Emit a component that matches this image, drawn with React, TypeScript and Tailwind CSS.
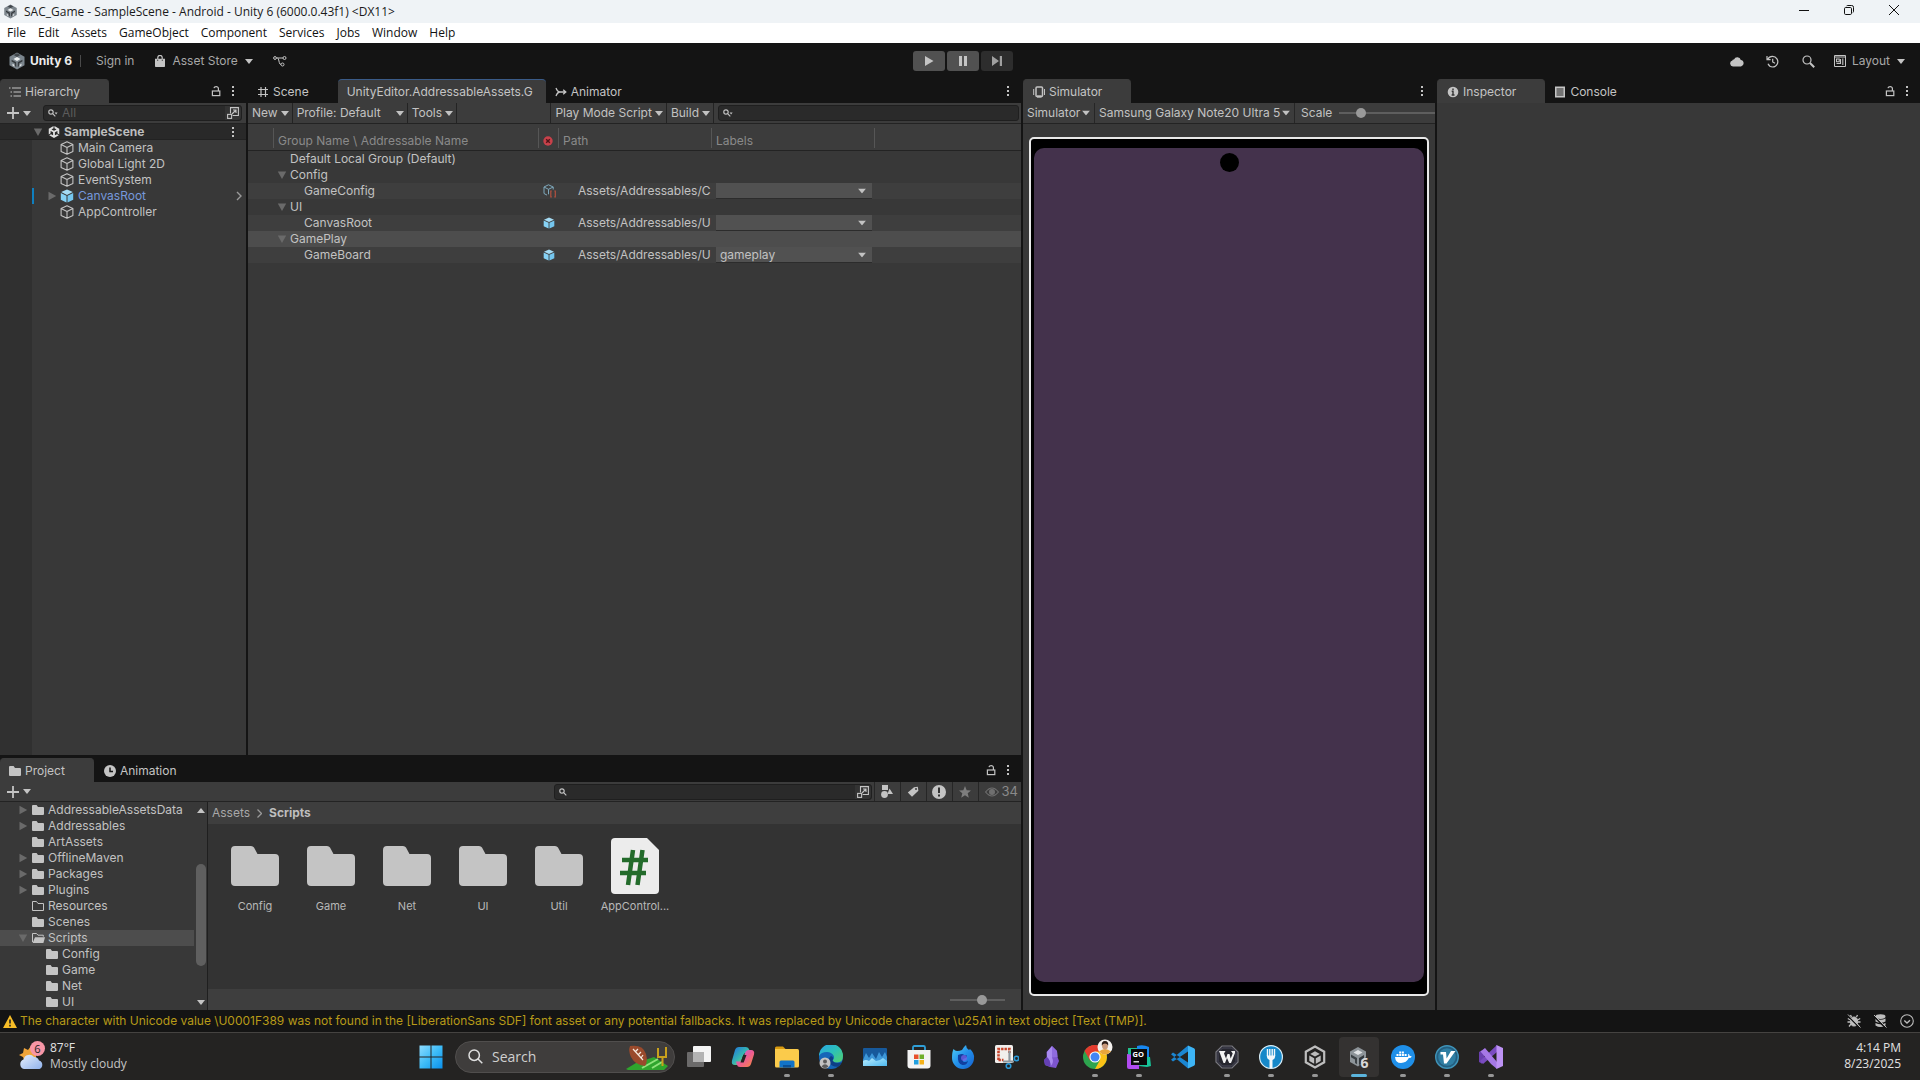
import { useId } from "react";
import type { ReactNode } from "react";
import { FaUnity } from "react-icons/fa6";

/* ---------- small glyphs ---------- */

function Caret({ className = "" }: { className?: string }) {
  return (
    <svg viewBox="0 0 8 5" className={`h-[5px] w-2 shrink-0 ${className}`} fill="currentColor" aria-hidden="true">
      <path d="M0 0h8L4 5z" />
    </svg>
  );
}

function Foldout({ open }: { open: boolean }) {
  return (
    <svg viewBox="0 0 10 10" className="size-2.5 shrink-0 text-[#6a6a6a]" fill="currentColor" aria-hidden="true">
      {open ? <path d="M0.8 1.5h8.4L5 9z" /> : <path d="M1.5 0.8v8.4L9.2 5z" />}
    </svg>
  );
}

function Dots() {
  return (
    <svg viewBox="0 0 4 12" className="h-3 w-1" fill="currentColor" aria-hidden="true">
      <rect x="1" y="1" width="2" height="2" />
      <rect x="1" y="5" width="2" height="2" />
      <rect x="1" y="9" width="2" height="2" />
    </svg>
  );
}

function Lock() {
  return (
    <svg viewBox="0 0 10 12" className="h-3 w-2.5" fill="none" stroke="currentColor" strokeWidth="1.2" aria-hidden="true">
      <rect x="1.4" y="6" width="7.4" height="4.6" />
      <path d="M7.4 6V3.6C7.4 2.3 6.4 1.7 5.2 1.7S3.2 2.2 2.9 3.1" />
    </svg>
  );
}

function Plus() {
  return (
    <svg viewBox="0 0 12 12" className="size-3" fill="none" stroke="currentColor" strokeWidth="1.8" aria-hidden="true">
      <path d="M6 0v12M0 6h12" />
    </svg>
  );
}

function Lens({ menu = false }: { menu?: boolean }) {
  return (
    <svg viewBox="0 0 10 8" className="h-2 w-2.5 shrink-0" fill="none" stroke="currentColor" strokeWidth="1.2" aria-hidden="true">
      <circle cx="3" cy="3" r="2.2" />
      <path d="M4.7 4.7L7.3 7.3" />
      {menu && <path d="M6.6 3.6h3L8.1 5.4z" fill="currentColor" stroke="none" />}
    </svg>
  );
}

function PopOut() {
  return (
    <svg viewBox="0 0 12 12" className="size-3" fill="none" stroke="currentColor" strokeWidth="1.1" aria-hidden="true">
      <path d="M3.5 6.6V.6h7.9v7.9H5.6" />
      <rect x=".6" y="7.4" width="4" height="4" />
      <path d="M5 7l4-4M6 3h3v3" />
    </svg>
  );
}

function UnityCube({ className = "size-4", tone = "#8d959b" }: { className?: string; tone?: string }) {
  return (
    <svg viewBox="0 0 24 24" className={className} aria-hidden="true">
      <path d="M12 .6l10 5.700v11.400l-10 5.700-10-5.700V6.300z" fill={tone} />
      <path d="M12 1.500l4.500 2.600-4.500 2.600-4.500-2.600z" fill="#42484d" />
      <path d="M12 6.800l4.600 2.600L12 12 7.400 9.400z" fill="#eef1f2" />
      <path d="M4.800 10.200l6.200 3.600v6.200l-2-1.200v-3.700l-4.200-2.400z" fill="#353a3e" />
      <path d="M19.200 10.200L13 13.800V20l2-1.200v-3.700l4.200-2.400z" fill="#353a3e" />
      <path d="M6 15.500l2.500 1.500v2.500L6 18z" fill="#dfe3e5" />
      <path d="M18 15.500l-2.500 1.500v2.500L18 18z" fill="#dfe3e5" />
    </svg>
  );
}

function CubeOutline() {
  return (
    <svg viewBox="0 0 14 14" className="size-3.5 shrink-0" fill="none" stroke="#c4c4c4" strokeWidth="1.100" strokeLinejoin="round" aria-hidden="true">
      <path d="M7 .7l5.900 2.800v7L7 13.300 1.100 10.500v-7zM1.100 3.500L7 6.500l5.900-3M7 6.500v6.800" />
    </svg>
  );
}

function PrefabCube({ className = "size-3.5" }: { className?: string }) {
  return (
    <svg viewBox="0 0 14 14" className={`${className} shrink-0`} aria-hidden="true">
      <path d="M7 .5l5.800 2.600L7 5.900 1.200 3.100z" fill="#a5dcf5" />
      <path d="M.8 4l5.700 2.800v6.700L.8 10.700z" fill="#86d2f5" />
      <path d="M13.200 4L7.500 6.800v6.700l5.700-2.800z" fill="#74c6ee" />
    </svg>
  );
}

function DataCube() {
  return (
    <svg viewBox="0 0 14 14" className="size-3.5 shrink-0" fill="none" aria-hidden="true">
      <path d="M5.500 .8l4.700 2.200v2.500M5.500 .8L1 3v6.500l3 1.600M1 3l4.500 2.300L10.200 3M5.500 5.300v5" stroke="#7fa9bd" />
      <path d="M8.800 7h-1v5.800h1M11.300 7h1v5.800h-1" stroke="#b2503f" strokeWidth="1.200" />
    </svg>
  );
}

function Folder({ kind = "solid" }: { kind?: "solid" | "empty" | "open" }) {
  if (kind === "empty")
    return (
      <svg viewBox="0 0 12 10" className="h-2.5 w-3 shrink-0" fill="none" stroke="#c4c4c4" aria-hidden="true">
        <path d="M.5 9.500V.5h4l1.500 2h5.500v7z" />
      </svg>
    );
  if (kind === "open")
    return (
      <svg viewBox="0 0 13 10" className="h-2.5 w-[13px] shrink-0" aria-hidden="true">
        <path d="M.5 9V.5h4l1.500 1.700h5.300v1.500" fill="none" stroke="#c4c4c4" />
        <path d="M3 4.200h10L11.400 10H.6z" fill="#c4c4c4" />
      </svg>
    );
  return (
    <svg viewBox="0 0 12 10" className="h-2.5 w-3 shrink-0" fill="#c4c4c4" aria-hidden="true">
      <path d="M0 1q0-1 1-1h3.600l1.400 2H11q1 0 1 1v6q0 1-1 1H1q-1 0-1-1z" />
    </svg>
  );
}

/* ---------- shared building blocks ---------- */

function Tab({ icon, label, active, focused, tight }: { icon?: ReactNode; label: string; active?: boolean; focused?: boolean; tight?: boolean }) {
  return (
    <button
      role="tab"
      aria-selected={!!active}
      className={`flex items-center gap-1 border-t pl-[9px] whitespace-nowrap ${tight ? "pr-[13px]" : "pr-[29px]"} ${
        active ? "rounded-t-sm bg-[#3c3c3c]" : ""
      } ${focused ? "border-[#3a5b88]" : active ? "border-[#3c3c3c]" : "border-transparent"}`}
    >
      {icon}
      <span>{label}</span>
    </button>
  );
}

function TabBar({ children, lock }: { children: ReactNode; lock?: boolean }) {
  return (
    <div className="flex h-6 shrink-0 bg-[#141414] text-[#c4c4c4]">
      <div role="tablist" className="flex min-w-0 flex-1 overflow-hidden">
        {children}
      </div>
      <div className="flex items-center gap-2.5 pr-[11px]">
        {lock && (
          <button aria-label="Lock panel">
            <Lock />
          </button>
        )}
        <button aria-label="Panel options">
          <Dots />
        </button>
      </div>
    </div>
  );
}

function MenuButton({ label, className = "" }: { label: string; className?: string }) {
  return (
    <button className={`flex h-full items-center gap-[3px] border-r border-[#232323] pl-1 pr-[3px] whitespace-nowrap ${className}`}>
      <span>{label}</span>
      <Caret />
    </button>
  );
}

function SelectBox({ label, options, className, caret }: { label: string; options: string[]; className: string; caret: string }) {
  return (
    <label className={`relative block ${className}`}>
      <span className="sr-only">{label}</span>
      <select className="h-full w-full appearance-none bg-transparent pl-1 leading-4 outline-none">
        {options.map((o) => (
          <option key={o}>{o}</option>
        ))}
      </select>
      <Caret className={`pointer-events-none absolute top-1/2 -translate-y-1/2 ${caret}`} />
    </label>
  );
}

const RANGE =
  "h-3 appearance-none bg-transparent [&::-webkit-slider-runnable-track]:h-0.5 [&::-webkit-slider-runnable-track]:bg-[#5e5e5e] [&::-webkit-slider-thumb]:-mt-1 [&::-webkit-slider-thumb]:size-2.5 [&::-webkit-slider-thumb]:appearance-none [&::-webkit-slider-thumb]:rounded-full [&::-webkit-slider-thumb]:bg-[#999]";

/* ---------- window chrome ---------- */

function TitleBar() {
  return (
    <header className="flex h-[23px] shrink-0 items-center bg-[#eff3f6] pl-[3px] font-['Open_Sans',sans-serif] text-xs text-[#1a1a1a]">
      <UnityCube className="size-[15px]" tone="#7d868d" />
      <h1 className="ml-1.5 flex-1">SAC_Game - SampleScene - Android - Unity 6 (6000.0.43f1) &lt;DX11&gt;</h1>
      <div className="flex pb-1 pr-1">
        <button aria-label="Minimize" className="flex w-[45px] justify-center">
          <svg viewBox="0 0 10 10" className="size-2.5" stroke="#111" strokeWidth="1"><path d="M0 5.500h10" /></svg>
        </button>
        <button aria-label="Restore" className="flex w-[45px] justify-center">
          <svg viewBox="0 0 10 10" className="size-2.5" stroke="#111" fill="none"><rect x=".5" y="2.500" width="7" height="7" rx="1.200" /><path d="M2.500 1.200Q2.800.5 3.500.5h4.200q1.800 0 1.800 1.800v4.200q0 .8-.8 1.100" /></svg>
        </button>
        <button aria-label="Close" className="flex w-[45px] justify-center">
          <svg viewBox="0 0 10 10" className="size-2.5" stroke="#111"><path d="M0 0l10 10M10 0L0 10" /></svg>
        </button>
      </div>
    </header>
  );
}

function MenuBar() {
  const items = ["File", "Edit", "Assets", "GameObject", "Component", "Services", "Jobs", "Window", "Help"];
  return (
    <nav className="flex h-5 shrink-0 items-center gap-3 bg-white pl-[7px] font-['Open_Sans',sans-serif] text-xs text-[#111]">
      {items.map((m) => (
        <button key={m}>{m}</button>
      ))}
    </nav>
  );
}

function EditorToolbar() {
  return (
    <div className="grid h-9 shrink-0 grid-cols-[1fr_auto_1fr] items-center bg-[#141414] text-[#a8a8a8]">
      <div className="flex items-center">
        <UnityCube className="ml-2 size-[18px]" tone="#7b858d" />
        <span className="ml-1 font-bold text-[#ececec]">Unity 6</span>
        <span className="ml-2 h-3 w-px bg-[#4a4a4a]" />
        <button className="ml-[15px]">Sign in</button>
        <button className="ml-[21px] flex items-center">
          <svg viewBox="0 0 10 12" className="h-3 w-2.5" aria-hidden="true">
            <path d="M2.800 4V2.600a2.200 2.200 0 014.400 0V4" fill="none" stroke="#c4c4c4" strokeWidth="1.200" />
            <path d="M0 3.800h10v7.400q0 .8-.8.8H.8q-.8 0-.8-.8z" fill="#c4c4c4" />
            <path d="M2.200 5.200h1M6.800 5.200h1" stroke="#141414" />
          </svg>
          <span className="mx-[7px]">Asset Store</span>
          <Caret className="text-[#c4c4c4]" />
        </button>
        <button className="ml-5" aria-label="Version control">
          <svg viewBox="0 0 14 12" className="h-3 w-3.5" fill="none" stroke="#c4c4c4" aria-hidden="true">
            <circle cx="2" cy="3" r="1.400" />
            <circle cx="11.500" cy="3" r="1.500" />
            <circle cx="9.500" cy="9.500" r="1.500" />
            <path d="M3.400 3H10M4.500 3q.8 0 1.200 2l.6 2.500q.4 2 1.700 2" />
          </svg>
        </button>
      </div>
      <div className="flex gap-0.5 pl-1.5 text-[#c4c4c4]">
        <button aria-label="Play" className="flex h-5 w-8 items-center justify-center rounded-[3px] bg-[#515151]">
          <svg viewBox="0 0 10 10" className="size-2.5" fill="currentColor"><path d="M1 0l8.500 5L1 10z" /></svg>
        </button>
        <button aria-label="Pause" className="flex h-5 w-8 items-center justify-center rounded-[3px] bg-[#515151]">
          <svg viewBox="0 0 10 10" className="size-2.5" fill="currentColor"><path d="M1 0h3v10H1zM6 0h3v10H6z" /></svg>
        </button>
        <button aria-label="Step" className="flex h-5 w-8 items-center justify-center rounded-[3px] bg-[#2d2d2d] text-[#a0a0a0]">
          <svg viewBox="0 0 10 10" className="size-2.5" fill="currentColor"><path d="M0 0l7 5-7 5zM7.800 0H10v10H7.800z" /></svg>
        </button>
      </div>
      <div className="flex items-center justify-end pr-[15px] text-[#c4c4c4]">
        <button aria-label="Cloud">
          <svg viewBox="0 0 14 11" className="h-[11px] w-3.5" fill="currentColor"><path d="M3 10.500a3 3 0 01-.6-5.900Q2.500 3.300 4 3.500A3.600 3.600 0 0110.800 4 3.300 3.300 0 0111 10.500z" /></svg>
        </button>
        <button aria-label="Undo history" className="ml-[22px]">
          <svg viewBox="0 0 13 13" className="size-[13px]" fill="none" stroke="currentColor" strokeWidth="1.200"><path d="M1.800 4.200A5.300 5.300 0 116.700 12 5.200 5.200 0 012 8.800M1 1v3.600h3.600M6.700 3.800V7l2.300 1.200" /></svg>
        </button>
        <button aria-label="Search" className="ml-[23px]">
          <svg viewBox="0 0 13 13" className="size-[13px]" fill="none" stroke="currentColor"><circle cx="5" cy="5" r="4" strokeWidth="1.200" /><path d="M8 8l4.200 4.200" strokeWidth="2" /></svg>
        </button>
        <button className="ml-[19px] flex items-center text-[#a8a8a8]">
          <svg viewBox="0 0 12 12" className="size-3 text-[#c4c4c4]" fill="none" stroke="currentColor"><path d="M.5.5h11v11H.5zM.5 2h11" /><path d="M2.500 4h2.700v2.700H2.500zM2.500 8.500h4M6.500 4v5M8.800 3.500V10" strokeWidth="1.100" /></svg>
          <span className="ml-1.5 mr-[7px]">Layout</span>
          <Caret className="text-[#c4c4c4]" />
        </button>
      </div>
    </div>
  );
}

/* ---------- hierarchy ---------- */

const OBJECTS = ["Main Camera", "Global Light 2D", "EventSystem", "CanvasRoot", "AppController"];

function Hierarchy() {
  return (
    <section className="flex min-h-0 min-w-0 flex-col bg-[#383838]">
      <TabBar lock>
        <Tab
          active
          label="Hierarchy"
          icon={
            <svg viewBox="0 0 12 10" className="h-2.5 w-3" fill="none" stroke="currentColor" strokeWidth="1.200">
              <path d="M3 1h9M4.500 5H12M4.500 9H12M0 1h1.500M1.500 5H3M1.500 9H3" />
            </svg>
          }
        />
      </TabBar>
      <div className="flex h-[21px] shrink-0 items-center border-b border-[#232323] bg-[#3c3c3c] pl-[7px] pr-1 text-[#c4c4c4]">
        <button aria-label="Create object" className="flex items-center gap-1">
          <Plus />
          <Caret />
        </button>
        <div className="ml-3 flex h-4 flex-1 items-center rounded-[3px] border border-[#1f1f1f] bg-[#2a2a2a] pl-1">
          <Lens menu />
          <input aria-label="Search hierarchy" placeholder="All" className="ml-1 w-full min-w-0 bg-transparent outline-none placeholder:text-[#5c5c5c]" />
          <button aria-label="Open in search window" className="flex h-3.5 items-center rounded-r-sm bg-[#333] px-0.5">
            <PopOut />
          </button>
        </div>
      </div>
      <div className="flex h-4 shrink-0 items-center border-b border-[#222] bg-[#292929] pl-[33px] pr-[11px]">
        <Foldout open />
        <FaUnity className="ml-[5px] size-3 text-[#e0e0e0]" />
        <span className="ml-1 flex-1 font-bold text-[#bdbdbd]">SampleScene</span>
        <button aria-label="Scene options" className="text-[#c4c4c4]">
          <Dots />
        </button>
      </div>
      <div className="flex min-h-0 flex-1">
        <div className="w-8 bg-[#303030]" />
        <ul className="flex-1">
          {OBJECTS.map((name) => {
            const prefab = name === "CanvasRoot";
            return (
              <li key={name} className={`flex h-4 items-center border-l-2 ${prefab ? "border-[#0f7fbf]" : "border-transparent"}`}>
                <span className="ml-[13px] mr-[3px] flex w-2.5">{prefab && <Foldout open={false} />}</span>
                {prefab ? <PrefabCube /> : <CubeOutline />}
                <span className={`ml-1 flex-1 ${prefab ? "text-[#7699dc]" : ""}`}>{name}</span>
                {prefab && (
                  <svg viewBox="0 0 6 10" className="mr-1 h-2.5 w-1.5" fill="none" stroke="#9a9a9a" strokeWidth="1.400">
                    <path d="M1 1l4 4-4 4" />
                  </svg>
                )}
              </li>
            );
          })}
        </ul>
      </div>
    </section>
  );
}

/* ---------- addressables ---------- */

type Row = { name: string; group?: boolean; leaf?: boolean; icon?: "data" | "prefab"; path?: string; label?: string; selected?: boolean };

const ROWS: Row[] = [
  { name: "Default Local Group (Default)", group: true, leaf: true },
  { name: "Config", group: true },
  { name: "GameConfig", icon: "data", path: "Assets/Addressables/C", label: "" },
  { name: "UI", group: true },
  { name: "CanvasRoot", icon: "prefab", path: "Assets/Addressables/U", label: "" },
  { name: "GamePlay", group: true, selected: true },
  { name: "GameBoard", icon: "prefab", path: "Assets/Addressables/U", label: "gameplay" },
];

function HeadCell({ children }: { children?: ReactNode }) {
  return (
    <th className="p-0 text-left align-bottom font-normal">
      <div className="mb-0.5 flex h-5 items-center border-l border-[#565656] pl-1 pt-[5px] leading-4">{children}</div>
    </th>
  );
}

function Addressables() {
  return (
    <section className="flex min-h-0 min-w-0 flex-col bg-[#383838]">
      <TabBar>
        <Tab
          label="Scene"
          icon={
            <svg viewBox="0 0 12 12" className="size-3" fill="none" stroke="currentColor" strokeWidth="1.200">
              <path d="M4 1v10M8.500 1v10M1 3.500h10M1 8.500h10" />
            </svg>
          }
        />
        <Tab active focused tight label="UnityEditor.AddressableAssets.G" />
        <Tab
          label="Animator"
          icon={
            <svg viewBox="0 0 12 10" className="h-2.5 w-3" fill="none" stroke="currentColor" strokeWidth="1.300">
              <path d="M1 1q1.500 4 4 4M1 9q1.500-4 4-4h5.500M8.200 2.800L10.800 5 8.200 7.200" />
            </svg>
          }
        />
      </TabBar>
      <div className="flex h-[21px] shrink-0 items-center border-b border-[#232323] bg-[#3c3c3c]">
        <MenuButton label="New" />
        <MenuButton label="Profile: Default" className="w-[115px] justify-between" />
        <MenuButton label="Tools" />
        <div className="ml-auto flex h-full border-l border-[#232323]">
          <MenuButton label="Play Mode Script" />
          <MenuButton label="Build" />
        </div>
        <div className="ml-1 mr-0.5 flex h-4 w-[301px] min-w-0 items-center rounded-[3px] border border-[#1f1f1f] bg-[#2a2a2a] pl-1">
          <Lens menu />
          <input aria-label="Search groups" className="w-full min-w-0 bg-transparent outline-none" />
        </div>
      </div>
      <table className="w-full table-fixed border-separate border-spacing-0">
        <colgroup>
          <col className="w-[25px]" />
          <col className="w-[265px]" />
          <col className="w-5" />
          <col className="w-[153px]" />
          <col className="w-[163px]" />
          <col />
        </colgroup>
        <thead>
          <tr className="h-[27px] bg-[#3c3c3c] text-[#8a8a8a] [&>*]:border-b [&>*]:border-[#232323]">
            <td />
            <HeadCell>Group Name \ Addressable Name</HeadCell>
            <HeadCell>
              <svg viewBox="0 0 10 10" className="size-2.5" role="img" aria-label="Asset type">
                <circle cx="5" cy="5" r="4.700" fill="#c8414a" />
                <path d="M3.200 3.200l3.600 3.600M6.800 3.200L3.200 6.800" stroke="#4e1418" strokeWidth="1.400" />
              </svg>
            </HeadCell>
            <HeadCell>Path</HeadCell>
            <HeadCell>Labels</HeadCell>
            <HeadCell />
          </tr>
        </thead>
        <tbody>
          {ROWS.map((r) => (
            <tr key={r.name} className={`h-4 ${r.selected ? "bg-[#4d4d4d]" : r.group ? "bg-[#383838]" : "bg-[#3e3e3e]"}`}>
              <td className="p-0" />
              <td className="p-0">
                <div className={`flex h-4 items-center ${r.group ? "pl-1" : "pl-[31px]"}`}>
                  {r.group && <span className="mr-[3px] flex w-2.5">{!r.leaf && <Foldout open />}</span>}
                  {r.name}
                </div>
              </td>
              <td className="p-0">
                <div className="flex h-4 items-center pl-[5px]">{r.icon === "data" ? <DataCube /> : r.icon ? <PrefabCube className="size-3" /> : null}</div>
              </td>
              <td className="p-0">
                <div className="pl-5 leading-4 whitespace-nowrap">{r.path}</div>
              </td>
              <td className="p-0">
                {r.label !== undefined && (
                  <SelectBox
                    label={`Labels for ${r.name}`}
                    options={[r.label]}
                    className="ml-[5px] mr-0.5 h-4 border-b border-[#2c2c2c] bg-[#515151]"
                    caret="right-1.5"
                  />
                )}
              </td>
              <td />
            </tr>
          ))}
        </tbody>
      </table>
    </section>
  );
}

/* ---------- project ---------- */

type TreeRow = { name: string; fold?: "open" | "closed"; kind?: "solid" | "empty" | "open"; child?: boolean; selected?: boolean };

const TREE: TreeRow[] = [
  { name: "AddressableAssetsData", fold: "closed" },
  { name: "Addressables", fold: "closed" },
  { name: "ArtAssets" },
  { name: "OfflineMaven", fold: "closed" },
  { name: "Packages", fold: "closed" },
  { name: "Plugins", fold: "closed" },
  { name: "Resources", kind: "empty" },
  { name: "Scenes" },
  { name: "Scripts", fold: "open", kind: "open", selected: true },
  { name: "Config", child: true },
  { name: "Game", child: true },
  { name: "Net", child: true },
  { name: "UI", child: true },
];

function FilterButton({ label, children }: { label: string; children: ReactNode }) {
  return (
    <button aria-label={label} className="flex h-full w-[26px] items-center justify-center border-l border-[#262626]">
      {children}
    </button>
  );
}

function Project() {
  return (
    <section className="flex min-h-0 min-w-0 flex-col bg-[#383838]">
      <TabBar lock>
        <Tab active label="Project" icon={<Folder />} />
        <Tab
          label="Animation"
          icon={
            <svg viewBox="0 0 12 12" className="ml-px size-3" aria-hidden="true">
              <circle cx="6" cy="6" r="6" fill="#c4c4c4" />
              <path d="M6 2.500V6.500h3" fill="none" stroke="#141414" strokeWidth="1.500" />
            </svg>
          }
        />
      </TabBar>
      <div className="flex h-5 shrink-0 items-center justify-between border-b border-[#232323] bg-[#3c3c3c] pl-[7px] text-[#c4c4c4]">
        <button aria-label="Create asset" className="flex items-center gap-1">
          <Plus />
          <Caret />
        </button>
        <div className="flex h-full min-w-0 items-center">
          <div className="mr-0.5 flex h-4 w-[318px] min-w-0 items-center rounded-[3px] border border-[#1f1f1f] bg-[#2a2a2a] pl-1">
            <Lens />
            <input aria-label="Search project" className="w-full min-w-0 bg-transparent outline-none" />
            <button aria-label="Open in search window" className="flex h-3.5 items-center rounded-r-sm bg-[#333] px-0.5">
              <PopOut />
            </button>
          </div>
          <FilterButton label="Search by type">
            <svg viewBox="0 0 12 13" className="h-[13px] w-3" fill="currentColor"><path d="M1 0h6v5H1zM8.500 3.500L12 9H6.500z" /><circle cx="3.500" cy="9.500" r="3.400" /></svg>
          </FilterButton>
          <FilterButton label="Search by label">
            <svg viewBox="0 0 12 12" className="size-3" fill="currentColor"><path d="M7 1.200L10.800.8l.6 3.900L5 10.800.8 6.600z" /><circle cx="9" cy="3" r="1" fill="#3c3c3c" /></svg>
          </FilterButton>
          <FilterButton label="Search by import log">
            <svg viewBox="0 0 14 14" className="size-3.5"><circle cx="7" cy="7" r="7" fill="#c4c4c4" /><path d="M7 2.600v5.400M7 9.400v2" stroke="#333" strokeWidth="2" /></svg>
          </FilterButton>
          <FilterButton label="Save search">
            <svg viewBox="0 0 12 12" className="size-3" fill="#7e7e7e"><path d="M6 0l1.700 4.200 4.300.3-3.300 2.800 1.100 4.400L6 9.300l-3.800 2.400 1.100-4.400L0 4.500l4.300-.3z" /></svg>
          </FilterButton>
          <button aria-label="Hidden packages: 34" className="flex h-full items-center gap-[3px] border-l border-[#262626] pl-1.5 pr-[3px] text-[13px] text-[#8a8a8a]">
            <svg viewBox="0 0 14 10" className="h-2.5 w-3.5" fill="none" stroke="#707070" strokeWidth="1.200"><path d="M.6 5Q7-3 13.400 5 7 13 .6 5z" /><circle cx="7" cy="5" r="2.400" fill="#707070" /></svg>
            34
          </button>
        </div>
      </div>
      <div className="flex min-h-0 flex-1">
        <div className="flex w-[208px] shrink-0 overflow-hidden border-r border-[#1f1f1f]">
          <ul className="flex-1 overflow-hidden">
            {TREE.map((t, i) => (
              <li key={i} className={`flex h-4 items-center ${t.child ? "pl-[46px]" : "pl-[18px]"} ${t.selected ? "bg-[#4d4d4d]" : ""}`}>
                {!t.child && <span className="mr-1 flex w-2.5 shrink-0">{t.fold && <Foldout open={t.fold === "open"} />}</span>}
                <span className="flex w-3 shrink-0">
                  <Folder kind={t.kind} />
                </span>
                <span className="ml-1 whitespace-nowrap">{t.name}</span>
              </li>
            ))}
          </ul>
          <div className="flex w-[13px] flex-col items-center pb-[5px] pt-1.5 text-[#c4c4c4]">
            <Caret className="rotate-180" />
            <div className="flex w-2.5 flex-1 flex-col py-1">
              <div className="flex-[47]" />
              <div className="flex-[102] rounded-full bg-[#5f5f5f]" />
              <div className="flex-[30]" />
            </div>
            <Caret />
          </div>
        </div>
        <div className="flex min-w-0 flex-1 flex-col bg-[#333]">
          <nav className="flex h-[22px] shrink-0 items-center gap-[7px] bg-[#3e3e3e] pl-1">
            <a href="#assets" className="text-[#a8a8a8]">Assets</a>
            <svg viewBox="0 0 5 9" className="h-[9px] w-[5px]" fill="none" stroke="#9a9a9a" strokeWidth="1.300"><path d="M.5.5l4 4-4 4" /></svg>
            <a href="#scripts" className="font-bold text-[#bdbdbd]">Scripts</a>
          </nav>
          <ul className="flex min-h-0 flex-1 pl-[9px] pt-3.5 text-[11px] text-[#b8b8b8]">
            {["Config", "Game", "Net", "UI", "Util"].map((n) => (
              <li key={n} className="flex w-[76px] flex-col items-center">
                <svg viewBox="0 0 48 56" className="h-14 w-12" fill="#c4c4c4" aria-hidden="true">
                  <path d="M4 8h16q2 0 3 1.500L26.500 16H44q4 0 4 4v24q0 4-4 4H4q-4 0-4-4V12q0-4 4-4z" />
                </svg>
                <span className="mt-[5px]">{n}</span>
              </li>
            ))}
            <li className="flex w-[76px] flex-col items-center">
              <svg viewBox="0 0 48 56" className="h-14 w-12" aria-hidden="true">
                <path d="M4 0h32l12 12v40q0 4-4 4H4q-4 0-4-4V4q0-4 4-4z" fill="#ececec" />
                <path d="M22 12l-5 35M31.500 12l-5 35M11 22h26M9 35h26" stroke="#236b2b" strokeWidth="4.500" fill="none" />
              </svg>
              <span className="mt-[5px]">AppControl...</span>
            </li>
          </ul>
          <div className="flex h-[21px] shrink-0 items-center justify-end bg-[#3e3e3e] pr-4">
            <input type="range" aria-label="Icon size" defaultValue={60} className={`w-[55px] ${RANGE}`} />
          </div>
        </div>
      </div>
    </section>
  );
}

/* ---------- simulator + inspector ---------- */

function Simulator() {
  return (
    <section className="flex min-h-0 min-w-0 flex-col overflow-hidden bg-[#383838]">
      <TabBar>
        <Tab
          active
          label="Simulator"
          icon={
            <svg viewBox="0 0 12 12" className="ml-px size-3" fill="none" stroke="currentColor" strokeWidth="1.500">
              <rect x="3" y="1" width="6.500" height="9.500" rx="1" />
              <path d="M4 10.500h4.500" strokeWidth="2.200" />
              <path d="M.7 3v6M11.500 3v6" strokeWidth="1" />
            </svg>
          }
        />
      </TabBar>
      <div className="flex h-[21px] shrink-0 items-center border-b border-[#232323] bg-[#3c3c3c]">
        <SelectBox label="View mode" options={["Simulator"]} className="h-full w-[72px] border-r border-[#262626]" caret="right-1" />
        <SelectBox label="Device" options={["Samsung Galaxy Note20 Ultra 5"]} className="h-full w-[200px] shrink-0 border-r border-[#262626]" caret="right-1" />
        <label htmlFor="scale" className="ml-1.5">Scale</label>
        <input id="scale" type="range" defaultValue={20} className={`ml-[7px] min-w-0 flex-1 ${RANGE}`} />
      </div>
      <div className="flex min-h-0 flex-1 px-1.5 pb-3.5 pt-[13px]">
        <div className="flex flex-1 rounded-[5px] border-2 border-[#e8e8e8] bg-black px-[3px] pb-3 pt-[9px]">
          <div className="flex flex-1 justify-center rounded-[10px] bg-[#44324c] pt-[5px]">
            <div className="size-[19px] rounded-full bg-black" />
          </div>
        </div>
      </div>
    </section>
  );
}

function Inspector() {
  return (
    <section className="flex min-h-0 min-w-0 flex-col bg-[#383838]">
      <TabBar lock>
        <Tab
          active
          label="Inspector"
          icon={
            <svg viewBox="0 0 12 12" className="ml-px size-3" aria-hidden="true">
              <circle cx="6" cy="6" r="5.300" fill="#c4c4c4" />
              <path d="M6 2.500v1.600M4.700 5.300H6V8.600M4.600 9h2.900" stroke="#333" strokeWidth="1.400" fill="none" />
            </svg>
          }
        />
        <Tab
          label="Console"
          icon={
            <svg viewBox="0 0 12 12" className="size-3" aria-hidden="true">
              <rect x="1" y=".5" width="10" height="11" fill="#c4c4c4" />
              <path d="M2.500 3h7M2.500 5h7M2.500 7h7M2.500 9h7" stroke="#222" />
            </svg>
          }
        />
      </TabBar>
    </section>
  );
}

function StatusBar() {
  return (
    <footer className="flex h-[22px] shrink-0 items-center bg-[#141414] pl-[3px] text-[#b89b18]">
      <svg viewBox="0 0 14 13" className="h-[13px] w-3.5" aria-hidden="true">
        <path d="M7 0l7 13H0z" fill="#f6bd27" />
        <path d="M7 4.500v4M7 9.800v1.600" stroke="#222" strokeWidth="1.600" />
      </svg>
      <p className="ml-[3px] flex-1 truncate">
        The character with Unicode value \U0001F389 was not found in the [LiberationSans SDF] font asset or any potential fallbacks. It was replaced by Unicode
        character \u25A1 in text object [Text (TMP)].
      </p>
      <div className="flex text-[#bdbdbd]">
        <button aria-label="Debugger disabled" className="flex w-[26px] justify-center">
          <svg viewBox="0 0 14 14" className="size-3.5" stroke="currentColor" fill="none"><ellipse cx="7" cy="7.500" rx="3.600" ry="4.500" fill="currentColor" /><path d="M4.500 3L3.500 1M9.500 3l1-2M3.500 6L.8 4.500M10.500 6l2.700-1.500M3.300 8H.5M10.700 8h2.800M4 10l-2 2.500M10 10l2 2.500" strokeWidth="1.300" /><path d="M0 1l13 13" stroke="#141414" strokeWidth="1.500" /><path d="M1 .5l12.500 13" /></svg>
        </button>
        <button aria-label="Cache server disconnected" className="flex w-[26px] justify-center">
          <svg viewBox="0 0 14 14" className="size-3.5" fill="currentColor"><ellipse cx="7.500" cy="2.600" rx="5" ry="2.300" /><path d="M2.500 4.500q5 2.600 10 0v3q-5 2.600-10 0zM2.500 9q5 2.600 10 0v2.500q-5 3-10 0z" /><path d="M0 1.500l12.500 12.500" stroke="#141414" strokeWidth="1.500" /><path d="M1 1l12.500 12.500" stroke="currentColor" /></svg>
        </button>
        <button aria-label="Progress" className="flex w-[27px] justify-center">
          <svg viewBox="0 0 14 14" className="size-3.5" fill="none" stroke="currentColor" strokeWidth="1.100"><circle cx="7" cy="7" r="6.300" /><path d="M4.300 6.500L7 9l3-2.800" strokeWidth="1.400" /></svg>
        </button>
      </div>
    </footer>
  );
}

/* ---------- taskbar ---------- */

function Art({ children }: { children: ReactNode }) {
  return (
    <svg viewBox="0 0 24 24" className="size-6" aria-hidden="true">
      {children}
    </svg>
  );
}

function TaskIcon({ name, children, running, active }: { name: string; children: ReactNode; running?: boolean; active?: boolean }) {
  return (
    <button aria-label={name} className={`relative mx-0.5 flex h-10 w-10 items-center justify-center rounded ${active ? "bg-[#343231]" : ""}`}>
      {children}
      {running && <span className={`absolute bottom-0 h-[3px] rounded-full ${active ? "w-4 bg-[#5bb4dc]" : "w-1.5 bg-[#969696]"}`} />}
    </button>
  );
}

function Taskbar() {
  const g = useId();
  const u = (n: string) => `url(#${g}${n})`;
  const grad = (n: string, a: string, b: string, c?: string) => (
    <linearGradient id={`${g}${n}`} x1="0" y1="0" x2="1" y2="1">
      <stop offset="0" stopColor={a} />
      {c && <stop offset=".5" stopColor={c} />}
      <stop offset="1" stopColor={b} />
    </linearGradient>
  );
  return (
    <div className="grid h-12 shrink-0 grid-cols-[1fr_auto_1fr] items-center border-t border-[#454341] bg-[#242322] font-['Open_Sans',sans-serif] text-xs text-[#e2e2e2]">
      <button className="flex items-center gap-[5px] pb-0.5 pl-[19px] text-left leading-4">
        <svg viewBox="0 0 26 30" className="h-[30px] w-[26px]" aria-hidden="true">
          <defs>{grad("cl", "#e8f0fc", "#8fb1ec")}</defs>
          <path d="M12 5l1 5 4-1v10H5l-1-3-4-2 4-2 1-5 4 2z" fill="#f0a53a" />
          <path d="M5 28a5 5 0 01-.5-9.500A6 6 0 0115 16a5 5 0 015 3.500A4.500 4.500 0 0120.500 28z" fill={u("cl")} />
          <circle cx="18.500" cy="7.500" r="7.500" fill="#f796a6" />
          <text x="18.500" y="11.500" textAnchor="middle" fontSize="11" fill="#222">6</text>
        </svg>
        <span>
          <span className="block">87°F</span>
          <span className="block text-[#c4c4c4]">Mostly cloudy</span>
        </span>
      </button>
      <div className="flex items-center pl-0.5">
        <TaskIcon name="Start">
          <Art>
            <defs>{grad("w", "#8fdcff", "#0a90ec", "#3dbcf8")}</defs>
            <path d="M.5.500h11v11h-11zM12.500.500h11v11h-11zM.5 12.500h11v11h-11zM12.500 12.500h11v11h-11z" fill={u("w")} />
          </Art>
        </TaskIcon>
        <label className="mx-0.5 flex h-8 w-[220px] items-center overflow-hidden rounded-full border border-[#504e4d] bg-[#3f3d3c] pl-3">
          <svg viewBox="0 0 15 15" className="size-[15px] shrink-0" fill="none" stroke="#dedede" strokeWidth="1.500" aria-hidden="true"><circle cx="6.200" cy="6.200" r="5.200" /><path d="M10 10l4.300 4.300" /></svg>
          <input type="search" placeholder="Search" aria-label="Search Windows" className="ml-[9px] w-full min-w-0 bg-transparent text-sm outline-none placeholder:text-[#cfcfcf]" />
          <svg viewBox="0 0 46 28" className="mr-1 h-7 w-[46px] shrink-0" aria-hidden="true">
            <path d="M2 26l10-6 18-6 14 9-4 4H4z" fill="#2fa52d" />
            <path d="M18 25l16-9M28 25l10-6" stroke="#8fe27a" strokeWidth="2" />
            <path d="M6 3q13-2 16 8 2 8-1 12-10-1-14-9Q4 8 6 3z" fill="#9a4a2c" />
            <path d="M9 6l10 11M11 9l3-3M14 12l3-3M17 15l2-3" stroke="#f5e9dd" strokeWidth="1.200" />
            <path d="M34 5v9h8V4M38.500 14v9" fill="none" stroke="#c9a11c" strokeWidth="2" />
          </svg>
        </label>
        <TaskIcon name="Task view">
          <Art>
            <rect x="0" y="7" width="17" height="15" rx="1" fill="#6b6a6a" />
            <rect x="6" y="1" width="18" height="16" rx="1" fill="#f4f4f4" />
            <rect x="6" y="7" width="11" height="10" fill="#b3b3b3" />
          </Art>
        </TaskIcon>
        <TaskIcon name="Copilot">
          <Art>
            <defs>
              {grad("c1", "#1f6fe0", "#e8d43a", "#35b6b0")}
              {grad("c2", "#a56bf0", "#f78a3c", "#ec5a94")}
            </defs>
            <path d="M8 2h7q2.500 0 3.200 2.500L19 8h-4q-2 0-2.700 2L9.500 18q-.8 2-3 2H4q-4 0-3-4.500L4 5q1-3 4-3z" fill={u("c1")} />
            <path d="M16 22H9q-2.500 0-3.200-2.500L5 16.500h4q2 0 2.700-2L14.500 7q.8-2 3-2H20q4 0 3 4.500L20 19q-1 3-4 3z" fill={u("c2")} />
            <path d="M12.300 10h3.200l-2.800 7.500H9.500z" fill="#242322" />
          </Art>
        </TaskIcon>
        <TaskIcon name="File Explorer" running>
          <Art>
            <path d="M0 3q0-1.500 1.500-1.500H8L10.500 4H0z" fill="#d99a0f" />
            <path d="M0 4h22.500q1.500 0 1.500 1.500V21q0 1.500-1.500 1.500h-21Q0 22.500 0 21z" fill="#fbcb4b" />
            <path d="M4.500 22.500V17q0-1.500 1.500-1.500h12q1.500 0 1.500 1.500v5.500z" fill="#1173c7" />
            <path d="M8 22.500V20h8v2.500z" fill="#0a4f94" />
          </Art>
        </TaskIcon>
        <TaskIcon name="Edge" running>
          <Art>
            <defs>{grad("e1", "#2aa3e8", "#55d06a", "#2cc0b8")}</defs>
            <circle cx="12" cy="12" r="12" fill="#1565b8" />
            <path d="M0 11A12 12 0 0124 11q0 6.500-6 6.500-4 0-4.500-2 2.500-2 1-5Q12.500 7 8 7 2 7 0 11z" fill={u("e1")} />
            <path d="M13.500 15.500q1.500 2.500 5.500 2.500 2.500 0 4-1-1.500 3-4 4.800Q12 22 10 17q-1-4 2-6 3.500 1.500 1.500 4.500z" fill="#0d3f86" />
            <circle cx="6" cy="18" r="5.500" fill="#c3c3c3" />
            <circle cx="6" cy="16.500" r="2" fill="#5c5c5c" />
            <path d="M2.500 21.500q3.500-4.500 7 0-3.500 3-7 0z" fill="#5c5c5c" />
          </Art>
        </TaskIcon>
        <TaskIcon name="Resource Monitor">
          <Art>
            <defs>{grad("m", "#bff0ff", "#4db8f0")}</defs>
            <rect x="0" y="3" width="24" height="18" rx="1" fill="#17599b" />
            <path d="M0 15l3-7 3 5 3-5 4 6 3-7 3 5 3-5 2 5v9H0z" fill="#3d97d8" />
            <path d="M0 16q3-2 6 0l3-3 4 3 4-1 3-2 4 3v5H0z" fill={u("m")} />
          </Art>
        </TaskIcon>
        <TaskIcon name="Microsoft Store">
          <Art>
            <path d="M6 7V2.500Q6 1 7.500 1h9Q18 1 18 2.500V7" fill="none" stroke="#2f9fd8" strokeWidth="1.800" />
            <path d="M.5 5h23v15.500q0 3-3 3h-17q-3 0-3-3z" fill="#f3f3f3" />
            <path d="M7 9.500h4.500V14H7z" fill="#e8502c" />
            <path d="M12.500 9.500H17V14h-4.500z" fill="#6fae2b" />
            <path d="M7 15h4.500v4.500H7z" fill="#219fe0" />
            <path d="M12.500 15H17v4.500h-4.500z" fill="#f5b21a" />
          </Art>
        </TaskIcon>
        <TaskIcon name="Firefox">
          <Art>
            <defs>{grad("f", "#4fd0f8", "#1560cf", "#2390ea")}</defs>
            <path d="M2.500 4q1.500 2 3.500 2 3 0 5-1 1.500-3 4-5 0 3 3 5l1-1q4.500 4 4 9a11 11 0 01-22 0Q1 7 2.500 4z" fill={u("f")} />
            <path d="M7 10q5-2 6 0l3 .5q0 3-3 3-2 1-1 3 3 1.500 5-1-1 5-5.500 4.500Q6 19 7 10z" fill="#103fa0" />
            <circle cx="13" cy="13" r="3" fill="#7a63e8" opacity=".7" />
          </Art>
        </TaskIcon>
        <TaskIcon name="Snipping Tool">
          <Art>
            <rect x="0" y="0" width="18" height="18" rx="1.500" fill="#f1efed" />
            <path d="M3.500 15V4h11v4M3.500 15h5" fill="none" stroke="#c8442b" strokeWidth="2.600" strokeDasharray="2.400 1" />
            <path d="M14.500 6v11M8 16.500h11" stroke="#8d979e" strokeWidth="2.200" />
            <circle cx="13.500" cy="21" r="2.300" fill="none" stroke="#2a9ada" strokeWidth="1.600" />
            <circle cx="21.500" cy="13.500" r="2.200" fill="none" stroke="#2a9ada" strokeWidth="1.600" />
          </Art>
        </TaskIcon>
        <TaskIcon name="Obsidian">
          <Art>
            <path d="M13 1l5 5 .5 6 1.500 4-3 7-6-1-5-2-1-5 3-3-.5-5z" fill="#7d55cf" />
            <path d="M13 1l-5 6-.2 5q4 3 3.700 9.500 4-4 1.500-9z" fill="#a98af0" />
            <path d="M13 1l5 5 .5 6-5.500.500z" fill="#8f6be0" />
            <path d="M7.800 12L5 15l1 5 5.500 1.700Q11.500 15 7.800 12z" fill="#6440b4" />
          </Art>
        </TaskIcon>
        <TaskIcon name="Chrome" running>
          <svg viewBox="0 0 30 30" className="-mt-[5px] ml-[5px] size-[30px] shrink-0" aria-hidden="true">
            <g transform="translate(0 6)">
              <circle cx="12" cy="12" r="12" fill="#2da44e" />
              <path d="M12 12L1.600 6A12 12 0 0122.400 6z" fill="#e33b2e" />
              <path d="M1.600 6L7 15.500 12 6.500h10.600A12 12 0 0012 0 12 12 0 001.600 6z" fill="#e33b2e" />
              <path d="M22.600 6.500H12l5 8.500-5 9A12 12 0 0022.600 6.500z" fill="#fbc116" />
              <circle cx="12" cy="12" r="5.600" fill="#fff" />
              <circle cx="12" cy="12" r="4.500" fill="#4285f4" />
            </g>
            <circle cx="22" cy="8" r="7.500" fill="#f4f1ee" />
            <path d="M16 12.500q6-5 12 0-2.500 3-6 3t-6-3z" fill="#e9a63a" />
            <ellipse cx="22" cy="6.500" rx="3" ry="4" fill="#c99a7c" />
            <path d="M18.800 6.500q-.5-4.500 3.200-4.500t3.200 4.500Q24 4.500 22 4.500t-3.200 2z" fill="#2b1d18" />
          </svg>
        </TaskIcon>
        <TaskIcon name="GoLand" running>
          <Art>
            <path d="M1 3h10v18H1z" fill="#22c08e" />
            <path d="M10 1q6-2 12 1v11H10z" fill="#1787f0" />
            <path d="M0 9l12 2v13H2q-2 0-2-2z" fill="#b14bf0" />
            <path d="M13 12h10l1 9-4 1-8-1z" fill="#17c59a" />
            <rect x="4" y="4" width="16" height="16" fill="#0a0a0a" />
            <text x="5.500" y="12" fontSize="7.500" fontWeight="700" fill="#fff">GO</text>
            <path d="M6.500 16.800H12" stroke="#fff" strokeWidth="1.200" />
          </Art>
        </TaskIcon>
        <TaskIcon name="Visual Studio Code">
          <Art>
            <path d="M2 7.500L0 9.300 17 23.500v-6zM2 16.500l-2-1.800L17 .5v6z" fill="#1b86d2" />
            <path d="M17 .5v23l6-2.800q1-.5 1-1.700V5q0-1.200-1-1.700z" fill="#3db4f5" />
          </Art>
        </TaskIcon>
        <TaskIcon name="Wwise" running>
          <Art>
            <path d="M7 1h10l6 6v10l-6 6H7l-6-6V7z" fill="#26262e" stroke="#77777f" strokeWidth="1.200" />
            <path d="M7.500 3h9l4.500 4.500v9L16.500 21h-9L3 16.500v-9z" fill="none" stroke="#48485a" />
            <path d="M4 6h6.500L9 8.500l2 5L12.500 9h2l1.200 4.500 2-5L16 6h4v2l-4 10h-1.800L12 13l-2 5H8.500L5 8.500z" fill="#f2f2f2" />
          </Art>
        </TaskIcon>
        <TaskIcon name="Fork" running>
          <Art>
            <circle cx="12" cy="12" r="11.400" fill="#1688c9" stroke="#d9eef8" strokeWidth="1.200" />
            <path d="M8.500 4v7M15.500 4v7M10.800 4v7M13.200 4v7" fill="none" stroke="#f2f8fb" strokeWidth="1.400" />
            <path d="M7.800 10.500h8.400q0 3.500-2.700 4.500V23h-3v-8q-2.700-1-2.700-4.500z" fill="#f2f8fb" />
          </Art>
        </TaskIcon>
        <TaskIcon name="Unity Hub" running>
          <Art>
            <path d="M12 1.500l9.200 5.200v10.600L12 22.500l-9.200-5.200V6.700z" fill="none" stroke="#bdbdbd" strokeWidth="2.200" />
            <path d="M12 6.300l4.800 2.600L12 11.600 7.200 8.900zM6.300 10.400l4.900 2.800v5.500l-4.900-2.800zM17.700 10.400l-4.900 2.800v5.500l4.900-2.800z" fill="#bdbdbd" />
          </Art>
        </TaskIcon>
        <TaskIcon name="Unity 6" running active>
          <Art>
            <path d="M11 2l8 4.500v5.500l-4 6-4 3.500-8-4.500V6.500z" fill="#8d9499" />
            <path d="M11 5l4.500 2.500L11 10 6.500 7.500z" fill="#e1e4e6" />
            <path d="M4 9.500l6 3.400v6.300l-2-1.200v-3.500l-4-2.300z" fill="#3c4246" />
            <path d="M12 12.900l5-2.900v3l-3 2v4l-2 1z" fill="#34393d" />
            <text x="13.500" y="22.500" fontSize="14" fontWeight="700" fill="#d8d8d8">6</text>
          </Art>
        </TaskIcon>
        <TaskIcon name="Docker" running>
          <Art>
            <circle cx="12" cy="12" r="12" fill="#1f8fe8" />
            <path d="M4 12h13q.5-2 0-3.200 1.500.5 1.800 2.200 1.500-.2 2 .4-.8 1.800-3 1.700Q15.500 18 10 18q-5.500 0-6-6z" fill="#fff" />
            <path d="M5.500 9h2v2h-2zM8.200 9h2v2h-2zM10.900 9h2v2h-2zM13.600 9h2v2h-2zM8.200 6.500h2v2h-2zM10.900 6.500h2v2h-2z" fill="#fff" />
          </Art>
        </TaskIcon>
        <TaskIcon name="VNC Viewer" running>
          <Art>
            <circle cx="12" cy="12" r="11.300" fill="#245f80" stroke="#3f93b8" strokeWidth="1.400" />
            <circle cx="12" cy="12" r="8.800" fill="#2f7ea3" />
            <path d="M5.500 7H11l.6 6.500L16 6h4.500l-9 12.500H9L8 9.500H5.500z" fill="#fff" />
          </Art>
        </TaskIcon>
        <TaskIcon name="Visual Studio" running>
          <Art>
            <path d="M0 7l2.500-1.500L5 7v10l-2.500 1.500L0 17z" fill="#6a3fae" />
            <path d="M2.500 18.500L17 5V.5h1L2 17z" fill="#7a4cc0" />
            <path d="M1 16l3 3L18 7V0z" fill="#7a4cc0" />
            <path d="M1.500 6.500L6 3l12 14v7L12 19z" fill="#a678e6" />
            <path d="M17.500 0L24 3v18l-6.500 3z" fill="#bd92f4" />
          </Art>
        </TaskIcon>
      </div>
      <time dateTime="2025-08-23T16:14" className="pb-0.5 pr-[19px] text-right leading-4">
        <span className="block">4:14 PM</span>
        <span className="block">8/23/2025</span>
      </time>
    </div>
  );
}

export default function App() {
  return (
    <div className="flex h-screen flex-col overflow-hidden bg-[#141414] font-[Inter,sans-serif] text-xs text-[#c2c2c2]">
      <TitleBar />
      <MenuBar />
      <EditorToolbar />
      <main className="grid min-h-0 flex-1 grid-cols-[1021fr_412fr_483fr] gap-0.5">
        <div className="grid min-h-0 min-w-0 grid-rows-[676fr_252fr] gap-[3px]">
          <div className="grid min-h-0 min-w-0 grid-cols-[246fr_773fr] gap-0.5">
            <Hierarchy />
            <Addressables />
          </div>
          <Project />
        </div>
        <Simulator />
        <Inspector />
      </main>
      <StatusBar />
      <Taskbar />
    </div>
  );
}
